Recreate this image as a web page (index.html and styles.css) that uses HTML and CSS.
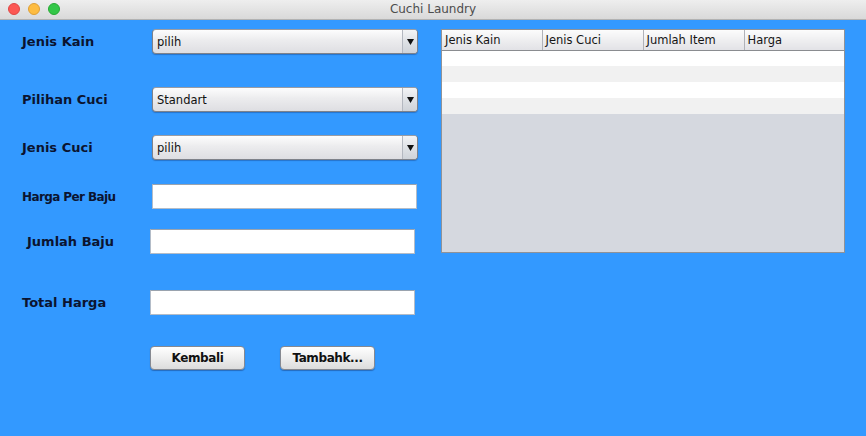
FILE: index.html
```html
<!DOCTYPE html>
<html lang="id">
<head>
<meta charset="utf-8">
<title>Cuchi Laundry</title>
<link rel="stylesheet" href="styles.css">
</head>
<body>
<div class="window">
  <header class="titlebar">
    <div class="lights">
      <span class="light light-red"></span>
      <span class="light light-yellow"></span>
      <span class="light light-green"></span>
    </div>
    <div class="title">Cuchi Laundry</div>
    <div></div>
  </header>
  <main class="content">
    <section class="form">
      <div class="row">
        <span class="lbl">Jenis Kain</span>
        <div class="combo"><span class="combo-text">pilih</span><span class="combo-arrow"><svg width="7" height="6" viewBox="0 0 7 6"><polygon points="0,0 7,0 3.5,6" fill="#111"/></svg></span></div>
      </div>
      <div class="row row-pilihan">
        <span class="lbl">Pilihan Cuci</span>
        <div class="combo"><span class="combo-text">Standart</span><span class="combo-arrow"><svg width="7" height="6" viewBox="0 0 7 6"><polygon points="0,0 7,0 3.5,6" fill="#111"/></svg></span></div>
      </div>
      <div class="row row-cuci">
        <span class="lbl">Jenis Cuci</span>
        <div class="combo"><span class="combo-text">pilih</span><span class="combo-arrow"><svg width="7" height="6" viewBox="0 0 7 6"><polygon points="0,0 7,0 3.5,6" fill="#111"/></svg></span></div>
      </div>
      <div class="row row-harga">
        <span class="lbl lbl-tight">Harga Per Baju</span>
        <input class="field" type="text">
      </div>
      <div class="row row-jumlah">
        <span class="lbl lbl-narrow lbl-indent">Jumlah Baju</span>
        <input class="field" type="text">
      </div>
      <div class="row row-total">
        <span class="lbl lbl-narrow">Total Harga</span>
        <input class="field" type="text">
      </div>
      <div class="actions">
        <button class="btn" type="button">Kembali</button>
        <button class="btn" type="button">Tambahk...</button>
      </div>
    </section>
    <section class="table-panel">
      <table class="grid">
        <thead>
          <tr>
            <th class="col-1">Jenis Kain</th>
            <th class="col-2">Jenis Cuci</th>
            <th class="col-3">Jumlah Item</th>
            <th class="col-4">Harga</th>
          </tr>
        </thead>
        <tbody>
          <tr><td></td><td></td><td></td><td></td></tr>
          <tr><td></td><td></td><td></td><td></td></tr>
          <tr><td></td><td></td><td></td><td></td></tr>
          <tr><td></td><td></td><td></td><td></td></tr>
        </tbody>
      </table>
    </section>
  </main>
</div>
</body>
</html>
```

FILE: styles.css
```css
* { box-sizing: border-box; }

html, body {
  margin: 0;
  padding: 0;
  width: 866px;
  height: 436px;
  overflow: hidden;
  font-family: "DejaVu Sans", "Liberation Sans", sans-serif;
}

.window {
  width: 866px;
  height: 436px;
  background: #3399ff;
  display: flex;
  flex-direction: column;
}

.titlebar {
  height: 20px;
  flex: 0 0 20px;
  display: grid;
  grid-template-columns: 1fr auto 1fr;
  align-items: center;
  background: linear-gradient(#eeeeee, #d9d9d9);
  border-bottom: 1px solid #b2b2b2;
}

.lights {
  display: flex;
  gap: 8px;
  padding-left: 8px;
  padding-bottom: 1px;
}

.light {
  width: 12px;
  height: 12px;
  border-radius: 50%;
}
.light-red { background: #fc5753; border: 1px solid #df4744; }
.light-yellow { background: #fdbc40; border: 1px solid #de9f34; }
.light-green { background: #33c748; border: 1px solid #27aa35; }

.title {
  font-size: 12px;
  color: #4d4d4d;
  padding-bottom: 1px;
}

.content {
  flex: 1;
  display: flex;
  align-items: flex-start;
  padding-top: 9px;
}

.form {
  width: 441px;
  flex: 0 0 441px;
  padding-left: 22px;
  display: flex;
  flex-direction: column;
}

.row {
  height: 25px;
  display: flex;
  align-items: center;
}
.row-pilihan { margin-top: 33px; }
.row-cuci { margin-top: 23px; }
.row-harga { margin-top: 24px; }
.row-jumlah { margin-top: 20px; }
.row-total { margin-top: 36px; }

.lbl {
  width: 130px;
  flex: 0 0 130px;
  font-weight: bold;
  font-size: 13px;
  color: #0b1430;
  white-space: nowrap;
}
.lbl-tight { font-size: 12px; letter-spacing: -0.6px; }
.lbl-narrow { width: 128px; flex-basis: 128px; }
.lbl-indent { padding-left: 5px; }

.combo {
  width: 266px;
  height: 25px;
  display: flex;
  border: 1px solid #7f828a;
  border-top-color: #9a9ca3;
  border-radius: 4px;
  background: linear-gradient(#fdfdfd, #ececee 45%, #dedee2);
  box-shadow: 0 1px 1px rgba(0, 0, 40, 0.25);
  overflow: hidden;
}

.combo-text {
  flex: 1;
  padding-left: 4px;
  display: flex;
  align-items: center;
  font-size: 11.5px;
  color: #111;
}

.combo-arrow {
  width: 15px;
  flex: 0 0 15px;
  display: flex;
  align-items: center;
  justify-content: center;
  border-left: 1px solid #b4b8c0;
  background: linear-gradient(#f3f4f6, #dfe2e6 50%, #cfd3d9);
}

.field {
  width: 265px;
  height: 25px;
  margin: 0;
  padding: 0 4px;
  background: #ffffff;
  border: 1px solid #b3bcc8;
  border-top-color: #9aa3ae;
  border-radius: 0;
  font-family: inherit;
  font-size: 12px;
  outline: none;
}

.actions {
  margin-top: 31px;
  padding-left: 128px;
  display: flex;
  gap: 35px;
}

.btn {
  width: 95px;
  height: 24px;
  margin: 0;
  padding: 0;
  border: 1px solid #868991;
  border-radius: 4px;
  background: linear-gradient(#ffffff, #f0f0f0 45%, #dcdcdc);
  box-shadow: 0 1px 1px rgba(0, 0, 40, 0.3);
  font-family: inherit;
  font-weight: bold;
  font-size: 12px;
  letter-spacing: -0.4px;
  color: #111;
}

.table-panel {
  width: 404px;
  height: 224px;
  border: 1px solid #8f9298;
  background: #d5d8df;
  overflow: hidden;
}

.grid {
  width: 100%;
  border-collapse: collapse;
  table-layout: fixed;
}

.grid th {
  height: 20px;
  padding: 0 0 0 3px;
  text-align: left;
  font-weight: normal;
  font-size: 11.5px;
  color: #151515;
  background: linear-gradient(#fcfcfc, #ececee 60%, #e2e2e6);
  border-bottom: 1px solid #8a8c90;
  border-right: 1px solid #b0b2b8;
  white-space: nowrap;
}
.grid th.col-4 { border-right: none; }
.col-1 { width: 100px; }
.col-2 { width: 101px; }
.col-3 { width: 101px; }

.grid td {
  height: 16px;
  padding: 0;
  background: #ffffff;
}
.grid tbody tr:nth-child(even) td { background: #f1f1f1; }
```
